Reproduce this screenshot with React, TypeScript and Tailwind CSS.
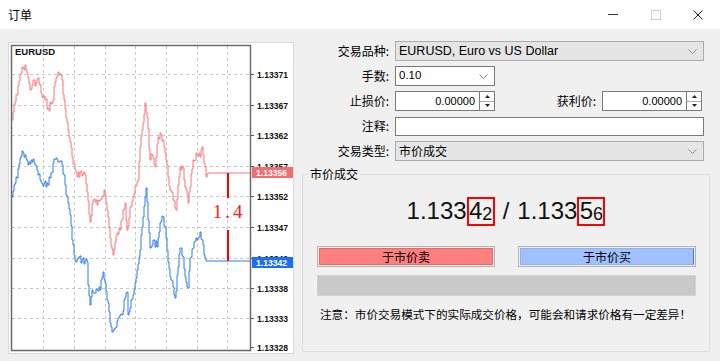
import React from 'react';

type Pt = [number, number];

// bid / ask tick lines, page coordinates
const bidAnchors: Pt[] = [
  [12, 197], [14, 185], [17, 178], [20, 158], [23, 153], [25, 155], [28, 165], [31, 160], [34, 163],
  [37, 170], [40, 180], [43, 186], [47, 183], [50, 178], [53, 163], [56, 158], [59, 162], [62, 165],
  [64, 175], [66, 195], [68, 203], [70, 215], [72, 240], [74, 255], [76, 262], [78, 258], [82, 260],
  [87, 262], [88, 285], [90, 305], [92, 290], [95, 293], [100, 290], [103, 272], [105, 283], [108, 303],
  [110, 323], [112, 332], [115, 328], [118, 318], [122, 315], [125, 297], [127, 292], [128, 315],
  [131, 300], [135, 283], [137, 270], [140, 250], [143, 217], [145, 197], [146, 188], [148, 220],
  [150, 248], [153, 240], [157, 247], [160, 223], [163, 217], [165, 227], [167, 250], [170, 277],
  [173, 287], [175, 298], [178, 267], [180, 248], [183, 257], [185, 277], [188, 288], [190, 258],
  [193, 248], [197, 240], [200, 232], [202, 240], [204, 255], [206, 261], [250, 261],
];

const askAnchors: Pt[] = [
  [12, 120], [14, 105], [17, 95], [20, 75], [23, 68], [25, 65], [27, 73], [30, 90], [33, 80], [35, 86],
  [38, 78], [42, 97], [45, 100], [48, 108], [52, 103], [55, 82], [58, 72], [62, 80], [64, 100],
  [66, 118], [68, 130], [72, 157], [75, 170], [77, 177], [80, 172], [85, 175], [87, 192], [90, 222],
  [93, 200], [97, 205], [100, 200], [104, 190], [108, 217], [110, 238], [113, 255], [117, 233],
  [120, 230], [123, 210], [125, 203], [127, 230], [130, 207], [133, 197], [136, 186], [138, 180],
  [140, 147], [143, 123], [145, 103], [147, 117], [150, 160], [152, 155], [155, 167], [158, 137],
  [160, 133], [163, 140], [166, 160], [170, 190], [173, 200], [176, 210], [178, 185], [180, 167],
  [183, 168], [185, 187], [188, 203], [190, 187], [193, 160], [197, 155], [200, 157], [202, 147],
  [204, 163], [206, 177], [208, 173], [250, 173],
];

function tickPath(anchors: Pt[], seed: number) {
  let s = seed;
  const rnd = () => {
    s = (s * 9301 + 49297) % 233280;
    return s / 233280;
  };
  let d = `M${anchors[0][0]} ${anchors[0][1]}`;
  for (let i = 0; i < anchors.length - 1; i++) {
    const [x0, y0] = anchors[i];
    const [x1, y1] = anchors[i + 1];
    const noisy = x1 - x0 < 20;
    for (let x = x0 + 1; x <= x1; x++) {
      const t = (x - x0) / (x1 - x0);
      const j = noisy && x !== x1 ? (rnd() - 0.5) * 8 : 0;
      const y = Math.round(y0 + (y1 - y0) * t + j);
      d += ` H${x} V${y}`;
    }
  }
  return d;
}

const gridY = [74, 105, 135, 166, 196, 227, 258, 288, 318];
const gridX = [43, 74, 105, 135, 166, 197, 227];
const axisLabels: [number, string][] = [
  [74, '1.13371'], [105, '1.13367'], [135, '1.13362'], [166, '1.13357'], [196, '1.13352'],
  [227, '1.13347'], [258, '1.13342'], [288, '1.13338'], [318, '1.13333'], [347, '1.13328'],
];

const PriceChart: React.FC = () => (
  <div className="w-[286px] h-[312px] shrink-0 border border-[#d9d9d9] bg-white">
    <svg width="284" height="310" viewBox="9 43 284 310">
      <rect x="9" y="43" width="284" height="310" fill="#fff" />
      {gridY.map((y) => (
        <line key={`h${y}`} x1="12" x2="250" y1={y + 0.5} y2={y + 0.5} stroke="#c8c8c8" strokeDasharray="3 3" />
      ))}
      {gridX.map((x) => (
        <line key={`v${x}`} x1={x + 0.5} x2={x + 0.5} y1="46" y2="350" stroke="#c8c8c8" strokeDasharray="3 3" />
      ))}
      <path d={tickPath(askAnchors, 7)} fill="none" stroke="#ff7272" strokeWidth="1" />
      <path d={tickPath(bidAnchors, 7)} fill="none" stroke="#2a78f6" strokeWidth="1" />
      <rect x="11.5" y="45.5" width="239" height="305" fill="none" stroke="#6a6a6a" strokeWidth="1.5" />
      <text x="15" y="55" fontSize="9.5" fontWeight="bold" fontFamily="Liberation Sans, sans-serif" fill="#111">
        EURUSD
      </text>
      {axisLabels.map(([y, t]) => (
        <g key={t}>
          <line x1="251" x2="254" y1={y + 0.5} y2={y + 0.5} stroke="#555" />
          <text x="257" y={y + 3.5} fontSize="8.6" fontWeight="bold" fontFamily="Liberation Sans, sans-serif" fill="#111">
            {t}
          </text>
        </g>
      ))}
      <rect x="252" y="167" width="41" height="11" fill="#f26d6d" />
      <text x="256" y="176" fontSize="8.6" fontWeight="bold" fontFamily="Liberation Sans, sans-serif" fill="#fff">
        1.13356
      </text>
      <rect x="252" y="257" width="41" height="11" fill="#1b6ff0" />
      <text x="256" y="266" fontSize="8.6" fontWeight="bold" fontFamily="Liberation Sans, sans-serif" fill="#fff">
        1.13342
      </text>
      {/* spread marker */}
      <line x1="228" x2="228" y1="173" y2="198" stroke="#ff0000" strokeWidth="2" />
      <line x1="228" x2="228" y1="230" y2="261" stroke="#ff0000" strokeWidth="2" />
      <text
        x="229"
        y="218"
        textAnchor="middle"
        fontSize="19"
        letterSpacing="3"
        fontFamily="Liberation Serif, serif"
        fill="#ff1a1a"
      >
        1.4
      </text>
    </svg>
  </div>
);

const Chevron: React.FC = () => (
  <svg width="9" height="5" viewBox="0 0 9 5" className="shrink-0">
    <polyline points="0.5,0.5 4.5,4.5 8.5,0.5" fill="none" stroke="#8a8a8a" strokeWidth="1" />
  </svg>
);

const Spinner: React.FC = () => (
  <div className="w-[15px] h-[20px] shrink-0 border border-l-0 border-[#7a7a7a] bg-white flex flex-col">
    <div className="flex-1 flex items-center justify-center border-b border-[#adadad]">
      <svg width="5" height="3" viewBox="0 0 5 3">
        <polygon points="0,3 2.5,0 5,3" fill="#222" />
      </svg>
    </div>
    <div className="flex-1 flex items-center justify-center">
      <svg width="5" height="3" viewBox="0 0 5 3">
        <polygon points="0,0 2.5,3 5,0" fill="#222" />
      </svg>
    </div>
  </div>
);

const Label: React.FC<{ children: React.ReactNode }> = ({ children }) => (
  <span className="w-[96px] shrink-0 text-right pr-[1px]">{children}</span>
);

const PriceBox: React.FC<{ big: string; small: string }> = ({ big, small }) => (
  <span className="inline-flex items-end h-[29px] w-[28px] justify-center border-2 border-[#ff0000] pb-[1px] leading-none">
    <span className="text-[24px]">{big}</span>
    <span className="text-[18px]">{small}</span>
  </span>
);

export default function App() {
  return (
    <div className="w-[720px] h-[361px] bg-[#f0f0f0] text-[12px] text-black font-['Liberation_Sans','Noto_Sans_CJK_SC',sans-serif] overflow-hidden">
      {/* title bar */}
      <div className="h-[29px] bg-white flex items-center justify-between">
        <span className="pl-[8px] font-['Noto_Sans_CJK_SC',sans-serif]">订单</span>
        <div className="flex items-center h-full">
          <div className="w-[46px] h-full flex items-center justify-center">
            <div className="w-[10px] h-px bg-[#333]" />
          </div>
          <div className="w-[40px] h-full flex items-center justify-center">
            <div className="w-[10px] h-[10px] border border-[#cccccc]" />
          </div>
          <div className="w-[44px] h-full flex items-center justify-center">
            <svg width="10" height="10" viewBox="0 0 10 10">
              <path d="M0.5 0.5 L9.5 9.5 M9.5 0.5 L0.5 9.5" stroke="#222" strokeWidth="1" />
            </svg>
          </div>
        </div>
      </div>

      <div className="flex pt-[13px] pl-[8px]">
        <PriceChart />

        <div className="flex-1 flex flex-col -mt-px">
          <div className="flex flex-col gap-[5px] pr-[16px] font-['Noto_Sans_CJK_SC',sans-serif]">
            <div className="flex items-center h-[20px] gap-[5px]">
              <Label>交易品种:</Label>
              <div className="flex-1 h-[20px] border border-[#adadad] bg-[#e5e5e5] flex items-center justify-between pl-[3px] pr-[6px]">
                <span className="text-[12.5px] font-['Liberation_Sans',sans-serif]">EURUSD, Euro vs US Dollar</span>
                <Chevron />
              </div>
            </div>
            <div className="flex items-center h-[20px] gap-[5px]">
              <Label>手数:</Label>
              <div className="w-[100px] h-[20px] border border-[#7a7a7a] bg-white flex items-center justify-between pl-[3px] pr-[6px]">
                <span className="text-[11.5px] font-['Liberation_Sans',sans-serif]">0.10</span>
                <Chevron />
              </div>
            </div>
            <div className="flex items-center h-[20px] gap-[5px]">
              <Label>止损价:</Label>
              <div className="flex">
                <div className="w-[85px] h-[20px] border border-[#7a7a7a] bg-white flex items-center justify-end pr-[4px] text-[11px] font-['Liberation_Sans',sans-serif]">
                  0.00000
                </div>
                <Spinner />
              </div>
              <span className="ml-auto pr-[1px]">获利价:</span>
              <div className="flex pr-[2px]">
                <div className="w-[85px] h-[20px] border border-[#7a7a7a] bg-white flex items-center justify-end pr-[4px] text-[11px] font-['Liberation_Sans',sans-serif]">
                  0.00000
                </div>
                <Spinner />
              </div>
            </div>
            <div className="flex items-center h-[20px] gap-[5px]">
              <Label>注释:</Label>
              <div className="flex-1 h-[19px] border border-[#7a7a7a] bg-white" />
            </div>
            <div className="flex items-center h-[20px] gap-[5px]">
              <Label>交易类型:</Label>
              <div className="flex-1 h-[20px] border border-[#adadad] bg-[#e5e5e5] flex items-center justify-between pl-[3px] pr-[6px]">
                <span>市价成交</span>
                <Chevron />
              </div>
            </div>
          </div>

          {/* market execution group */}
          <fieldset className="mt-[5px] ml-[8px] w-[408px] h-[186px] border border-[#dcdcdc] rounded-[2px] px-0 pb-0">
            <legend className="ml-[5px] px-[2px] leading-[16px] font-['Noto_Sans_CJK_SC',sans-serif]">市价成交</legend>
            <div className="mt-[15px] flex items-end justify-center text-[24px] leading-none text-[#111]">
              <span className="pb-[3px]">1.133</span>
              <PriceBox big="4" small="2" />
              <span className="pb-[3px] px-[8px]">/</span>
              <span className="pb-[3px]">1.133</span>
              <PriceBox big="5" small="6" />
            </div>
            <div className="mt-[20px] pl-[14px] flex gap-[23px] font-['Noto_Sans_CJK_SC',sans-serif]">
              <button className="w-[178px] h-[21px] border border-[#b4b4b4] p-px bg-[#f0f0f0]">
                <div className="h-full border border-[#e26a6a] bg-[#ff7f7f] flex items-center justify-center leading-none">
                  于市价卖
                </div>
              </button>
              <button className="w-[178px] h-[21px] border border-[#b4b4b4] p-px bg-[#f0f0f0]">
                <div className="h-full border border-[#8fb0f5] border-r-[#3d7cf5] bg-[#a0c0ff] flex items-center justify-center leading-none">
                  于市价买
                </div>
              </button>
            </div>
            <div className="mt-[8px] ml-[14px] w-[379px] h-[21px] bg-[#c9c9c9] border border-[#d2d2d2]" />
            <p className="mt-[10px] ml-[17px] text-[11.6px] font-['Noto_Sans_CJK_SC',sans-serif]">
              注意：市价交易模式下的实际成交价格，可能会和请求价格有一定差异！
            </p>
          </fieldset>
        </div>
      </div>
    </div>
  );
}
